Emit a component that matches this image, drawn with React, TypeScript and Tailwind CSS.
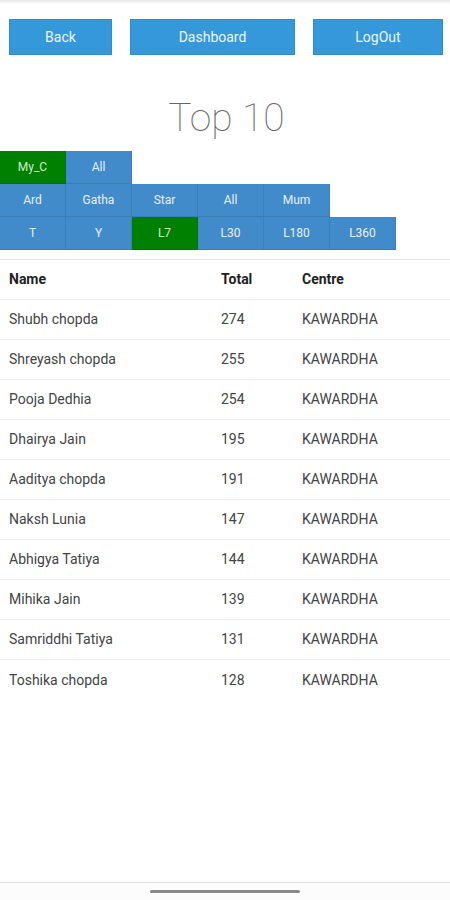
const rows = [
  { name: "Shubh chopda", total: 274, centre: "KAWARDHA" },
  { name: "Shreyash chopda", total: 255, centre: "KAWARDHA" },
  { name: "Pooja Dedhia", total: 254, centre: "KAWARDHA" },
  { name: "Dhairya Jain", total: 195, centre: "KAWARDHA" },
  { name: "Aaditya chopda", total: 191, centre: "KAWARDHA" },
  { name: "Naksh Lunia", total: 147, centre: "KAWARDHA" },
  { name: "Abhigya Tatiya", total: 144, centre: "KAWARDHA" },
  { name: "Mihika Jain", total: 139, centre: "KAWARDHA" },
  { name: "Samriddhi Tatiya", total: 131, centre: "KAWARDHA" },
  { name: "Toshika chopda", total: 128, centre: "KAWARDHA" },
];

const tabRows = [
  [
    { label: "My_C", active: true },
    { label: "All", active: false },
  ],
  [
    { label: "Ard", active: false },
    { label: "Gatha", active: false },
    { label: "Star", active: false },
    { label: "All", active: false },
    { label: "Mum", active: false },
  ],
  [
    { label: "T", active: false },
    { label: "Y", active: false },
    { label: "L7", active: true },
    { label: "L30", active: false },
    { label: "L180", active: false },
    { label: "L360", active: false },
  ],
];

const App = () => (
  <div className="relative w-[450px] h-[900px] bg-white font-['Roboto',sans-serif] overflow-hidden">
    <div className="h-[4px] bg-gradient-to-b from-[#e6e6e6] to-white" />

    <div className="flex pl-[9px] pt-[15px] gap-[18px]">
      <button className="w-[103px] h-[36px] bg-[#3498db] text-[#eef6fc] text-[14px] border border-[#2f8cca]">Back</button>
      <button className="w-[165px] h-[36px] bg-[#3498db] text-[#eef6fc] text-[14px] border border-[#2f8cca]">Dashboard</button>
      <button className="w-[130px] h-[36px] bg-[#3498db] text-[#eef6fc] text-[14px] border border-[#2f8cca]">LogOut</button>
    </div>

    <h1 className="text-center text-[39px] font-thin text-[#666] leading-none mt-[44px] pl-[3px]">Top 10</h1>

    <div className="mt-[13px]">
      {tabRows.map((r, i) => (
        <div key={i} className="flex">
          {r.map((t) => (
            <div
              key={t.label}
              className={
                t.active
                  ? "w-[66px] h-[33px] flex items-center justify-center text-[12px] bg-[#008000] text-[#c9eec9] border-r border-b border-[#0a6f0a]"
                  : "w-[66px] h-[33px] flex items-center justify-center text-[12px] bg-[#428bca] text-[#e6f0fa] border-r border-b border-[#3a7db8]"
              }
            >
              {t.label}
            </div>
          ))}
        </div>
      ))}
    </div>

    <div className="mt-[9px] border-t border-[#e4e4e4] text-[14px]">
      <div className="grid grid-cols-[212px_81px_1fr] pl-[9px] h-[40px] items-center font-bold text-[#222] border-b border-[#ececec]">
        <span>Name</span>
        <span>Total</span>
        <span>Centre</span>
      </div>
      {rows.map((r, i) => (
        <div
          key={r.name}
          className={
            i < rows.length - 1
              ? "grid grid-cols-[212px_81px_1fr] pl-[9px] h-[40px] items-center text-[#444] border-b border-[#ececec]"
              : "grid grid-cols-[212px_81px_1fr] pl-[9px] h-[40px] items-center text-[#444]"
          }
        >
          <span>{r.name}</span>
          <span>{r.total}</span>
          <span>{r.centre}</span>
        </div>
      ))}
    </div>

    <div className="absolute left-0 right-0 bottom-0 h-[18px] border-t border-[#e2e2e2] bg-[#fcfcfc] flex justify-center pt-[7px]">
      <div className="w-[150px] h-[3px] rounded-full bg-[#8a8a8a]" />
    </div>
  </div>
);

export default App;
